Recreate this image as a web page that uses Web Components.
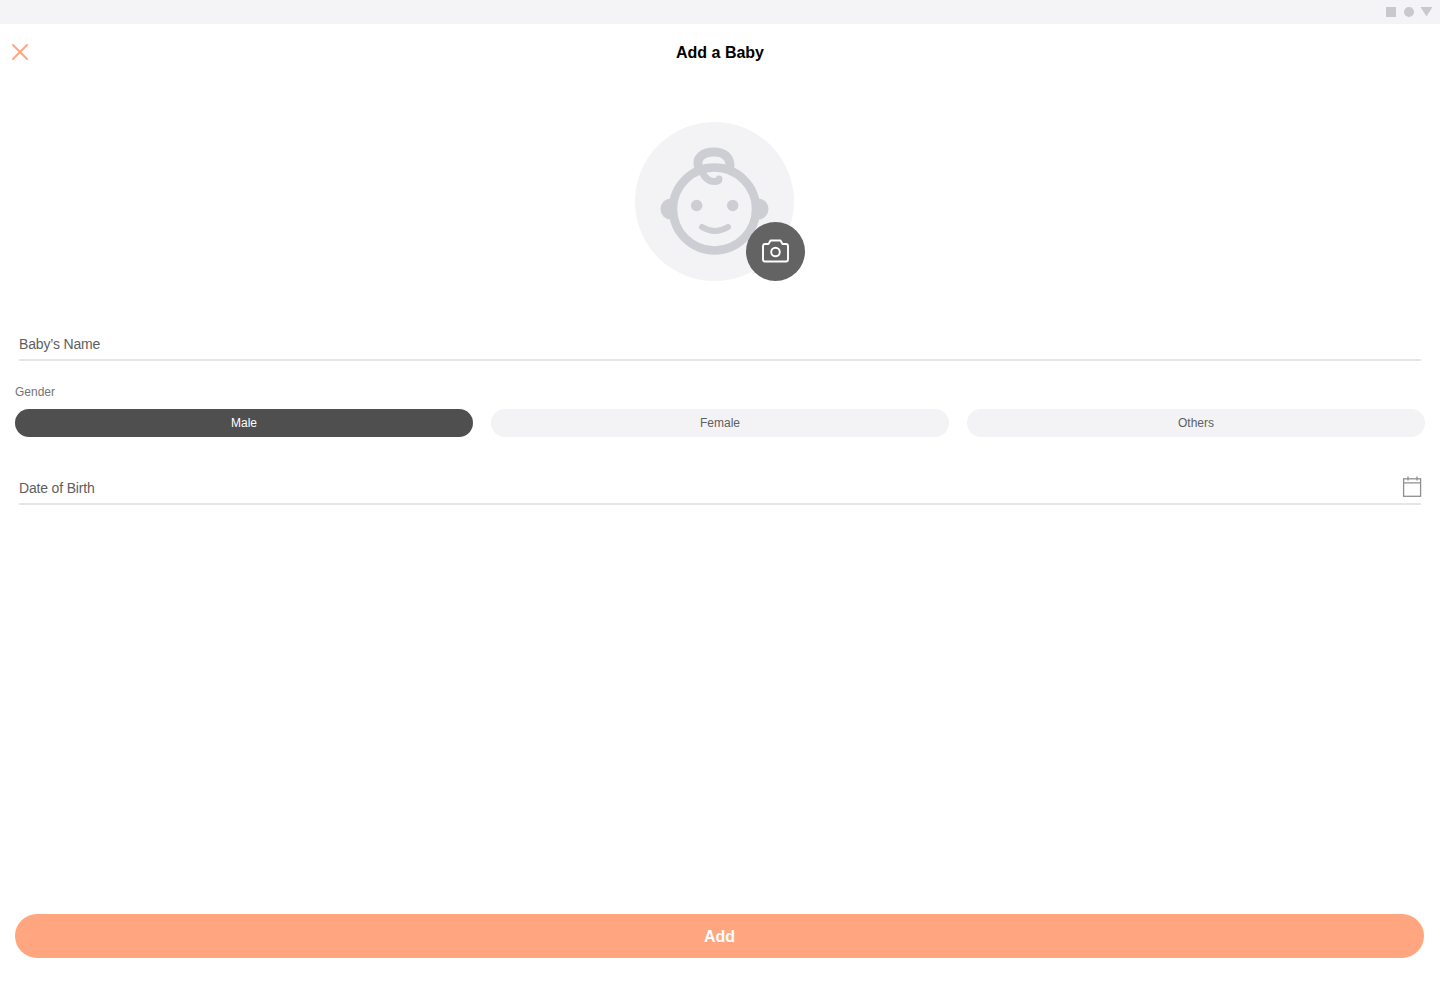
<!DOCTYPE html>
<html lang="en"><head><meta charset="utf-8"><title>Add a Baby</title>
<style>
html,body{margin:0;padding:0;background:#fff}
body{font-family:"Liberation Sans",Arial,sans-serif;}
</style></head>
<body>
<add-baby-page>
  <status-bar></status-bar>
  <page-header>Add a Baby</page-header>
  <baby-avatar></baby-avatar>
  <line-field style="margin-top:54px">Baby’s Name</line-field>
  <gender-picker></gender-picker>
  <line-field style="margin-top:42px" calendar>Date of Birth</line-field>
  <primary-button>Add</primary-button>
</add-baby-page>
<script>
function def(name, html, init){
  customElements.define(name, class extends HTMLElement{
    connectedCallback(){
      if(this.shadowRoot) return;
      const r=this.attachShadow({mode:'open'});
      r.innerHTML=html;
      if(init) init.call(this,r);
    }
  });
}
def('add-baby-page',`<style>:host{display:flex;flex-direction:column;height:990px;box-sizing:border-box;overflow:hidden;background:#fff}</style><slot></slot>`);
def('status-bar',`<style>:host{display:flex;height:24px;background:#f4f4f6;justify-content:flex-end;align-items:flex-start;flex:none}
svg{display:block;margin:6px 7px 0 0}</style>
<svg width="47" height="12" viewBox="0 0 47 12"><rect x="0" y="1" width="10" height="10" fill="#c8c9cd"/><circle cx="23" cy="6" r="5" fill="#c8c9cd"/><path d="M34.500 1h12l-6 9.500z" fill="#c8c9cd"/></svg>`);
def('page-header',`<style>:host{display:flex;height:56px;box-sizing:border-box;padding-top:2px;flex:none;align-items:center;justify-content:center;position:relative;font-weight:700;font-size:16px;color:#000}
svg{position:absolute;left:11px;top:19px}</style>
<svg width="18" height="18" viewBox="0 0 18 18"><path d="M2 2l14 14M16 2L2 16" stroke="#ffa680" stroke-width="2" stroke-linecap="round" fill="none"/></svg><slot></slot>`);
def('baby-avatar',`<style>:host{display:block;flex:none;width:170px;height:159px;margin:42px 0 0 635px;position:relative}
.c{width:159px;height:159px;border-radius:50%;background:#f3f3f5;display:block}
.cam{position:absolute;left:111px;top:100px;width:59px;height:59px;border-radius:50%;background:#636363;display:flex;align-items:center;justify-content:center}</style>
<svg class="c" width="159" height="159" viewBox="0 0 159 159">
 <g fill="#cdced3">
  <circle cx="36" cy="87" r="10.500"/><circle cx="123" cy="87" r="10.500"/>
 </g>
 <circle cx="79.500" cy="87" r="41.500" fill="#f3f3f5" stroke="#cdced3" stroke-width="8.500"/>
 <g fill="none" stroke="#cdced3" stroke-linecap="round">
  <path d="M64 46C60 36 68 30 79 30C89 30 95 35 95 44" stroke-width="9"/>
  <path d="M67 48C68 55 74 59.500 79 59.500C83 59.500 84 58 84 57" stroke-width="7"/>
  <path d="M67 105Q80 113 93 105" stroke-width="6"/>
 </g>
 <g fill="#cdced3">
  <circle cx="61.700" cy="83.500" r="5.700"/><circle cx="97.700" cy="83.500" r="5.700"/>
 </g>
</svg>
<span class="cam"><svg width="29" height="24" viewBox="0 0 29 24" fill="none" stroke="#fff" stroke-width="1.900" stroke-linejoin="round" style="margin-top:-1px"><path d="M4 5h3.500l2-3.500h10l2 3.500h3.500a2 2 0 0 1 2 2v13.500a2 2 0 0 1-2 2H4a2 2 0 0 1-2-2V7a2 2 0 0 1 2-2z"/><circle cx="14.500" cy="13" r="4.300"/></svg></span>`);
def('line-field',`<style>:host{display:flex;flex:none;height:26px;margin-left:19px;margin-right:19px;box-sizing:border-box;border-bottom:2px solid #e6e6e9;align-items:flex-start;justify-content:space-between;font-size:14px;letter-spacing:-.17px;color:#5e5e60;padding:1px 0 0 0;line-height:16px;position:relative}
svg{position:absolute;right:-1px;top:-3px}</style><slot></slot><svg id="cal" width="20" height="22" viewBox="0 0 20 22" fill="none" stroke="#8f8f91" stroke-width="1.300"><rect x="1.600" y="2.800" width="17" height="17.500"/><path d="M1.600 6.800h17M6 .6v4M15 .6v4" /></svg>`,function(r){if(!this.hasAttribute('calendar'))r.getElementById('cal').remove();});
def('gender-picker',`<style>:host{display:block;flex:none;margin:24px 15px 0 15px}
.l{font-size:12px;line-height:14px;color:#757577;margin-bottom:10px}
.row{display:grid;grid-template-columns:repeat(3,458px);column-gap:18px}</style>
<div class="l">Gender</div><div class="row"><gender-pill active>Male</gender-pill><gender-pill>Female</gender-pill><gender-pill>Others</gender-pill></div>`);
def('gender-pill',`<style>:host{display:flex;height:28px;border-radius:14px;background:#f3f3f5;color:#606062;align-items:center;justify-content:center;font-size:12px}
:host([active]){background:#4f4f4f;color:#fff}</style><slot></slot>`);
def('primary-button',`<style>:host{display:flex;flex:none;height:44px;box-sizing:border-box;padding-top:2px;margin:auto 16px 32px 15px;border-radius:22px;background:#ffa680;color:#fff;font-weight:700;font-size:16px;align-items:center;justify-content:center}</style><slot></slot>`);
</script>
</body></html>
